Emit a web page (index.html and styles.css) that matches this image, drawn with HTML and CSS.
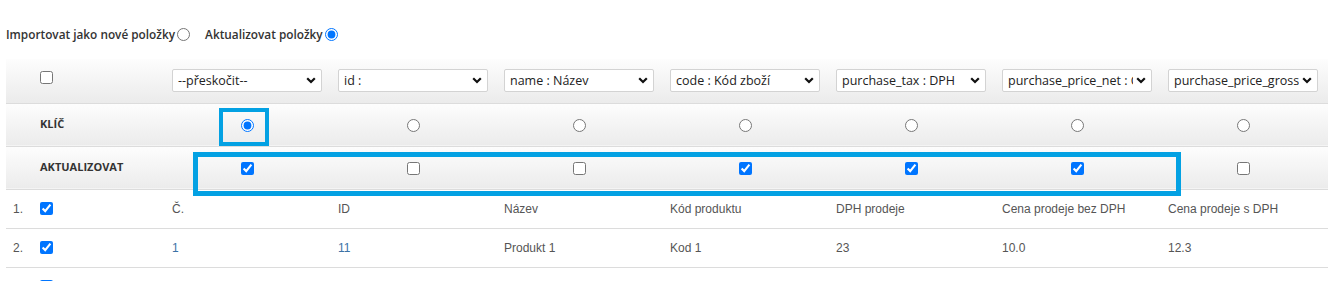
FILE: index.html
```html
<!DOCTYPE html>
<html lang="cs">
<head>
    <meta charset="UTF-8">
    <title>Import položek</title>
    <link rel="stylesheet" href="styles.css">
</head>
<body>
<div id="import">
    <div class="mode">
        <label>Importovat jako nové položky<input type="radio" name="mode" /></label>
        <label>Aktualizovat položky<input type="radio" name="mode" checked /></label>
    </div>
    <div class="gridWrap">
        <table class="grid">
            <colgroup>
                <col class="first" />
                <col /><col /><col /><col /><col /><col /><col />
            </colgroup>
            <tr class="headRow">
                <td class="lead"><input type="checkbox" /></td>
                <td><select><option>--přeskočit--</option></select></td>
                <td><select><option>id :</option></select></td>
                <td><select><option>name : Název</option></select></td>
                <td><select><option>code : Kód zboží</option></select></td>
                <td><select><option>purchase_tax : DPH</option></select></td>
                <td><select><option>purchase_price_net : Cena bez DPH</option></select></td>
                <td><select><option>purchase_price_gross : Cena s DPH</option></select></td>
            </tr>
            <tr class="headRow">
                <td class="lead"><span class="tag">KLÍČ</span></td>
                <td class="mid"><input type="radio" name="key" checked /></td>
                <td class="mid"><input type="radio" name="key" /></td>
                <td class="mid"><input type="radio" name="key" /></td>
                <td class="mid"><input type="radio" name="key" /></td>
                <td class="mid"><input type="radio" name="key" /></td>
                <td class="mid"><input type="radio" name="key" /></td>
                <td class="mid"><input type="radio" name="key" /></td>
            </tr>
            <tr class="headRow">
                <td class="lead"><span class="tag">AKTUALIZOVAT</span></td>
                <td class="mid"><input type="checkbox" checked /></td>
                <td class="mid"><input type="checkbox" /></td>
                <td class="mid"><input type="checkbox" /></td>
                <td class="mid"><input type="checkbox" checked /></td>
                <td class="mid"><input type="checkbox" checked /></td>
                <td class="mid"><input type="checkbox" checked /></td>
                <td class="mid"><input type="checkbox" /></td>
            </tr>
            <tr class="dataRow">
                <td class="lead"><span class="num">1.</span><input type="checkbox" checked /></td>
                <td>Č.</td>
                <td>ID</td>
                <td>Název</td>
                <td>Kód produktu</td>
                <td>DPH prodeje</td>
                <td>Cena prodeje bez DPH</td>
                <td>Cena prodeje s DPH</td>
            </tr>
            <tr class="dataRow">
                <td class="lead"><span class="num">2.</span><input type="checkbox" checked /></td>
                <td class="link">1</td>
                <td class="link">11</td>
                <td>Produkt 1</td>
                <td>Kod 1</td>
                <td>23</td>
                <td>10.0</td>
                <td>12.3</td>
            </tr>
            <!-- další řádek začíná pod okrajem, vidět je jen zaškrtávátko -->
            <tr class="dataRow">
                <td class="lead"><span class="num"></span><input type="checkbox" checked /></td>
                <td></td><td></td><td></td><td></td><td></td><td></td><td></td>
            </tr>
        </table>
        <!-- zvýraznění pro návod -->
        <div class="mark markKey"></div>
        <div class="mark markUpdate"></div>
    </div>
</div>
</body>
</html>
```

FILE: styles.css
```css
*{ margin: 0; padding: 0; box-sizing: border-box; }
html, body{ overflow: hidden; }
body{ background: #fff; color: #333; font: 12px/1.5 "Open Sans", "Noto Sans", sans-serif; }

#import{ padding: 26px 0 0 6px; }
#import .mode{ height: 16px; line-height: 16px; font-weight: 600; font-size: 11.8px; color: #333; }
#import .mode label{ margin-right: 12px; }
#import .mode input{ width: 13px; height: 13px; margin: 0 0 0 2px; vertical-align: -2px; }

.gridWrap{ position: relative; margin-top: 17px; width: 1323px; }
.grid{ width: 1323px; table-layout: fixed; border-collapse: collapse; }
.grid col{ width: 166px; }
.grid col.first{ width: 161px; }
.grid td{ padding: 0 11px 0 5px; text-align: left; }
.grid td.lead{ padding-left: 34px; }

.headRow td{ background: linear-gradient(#fdfdfd, #ebebeb); border-bottom: 1px solid #dcdcdc; }
.headRow:first-child td{ height: 44px; }
.headRow:first-child td.lead input{ vertical-align: 1px; }
.headRow + .headRow td{ height: 43px; vertical-align: top; padding-top: 11px; }
.headRow:last-child td{ border-bottom: 0; height: 42px; }
.headRow td.mid{ text-align: center; padding-top: 0; vertical-align: middle; }
.headRow td.mid input{ margin: 0; vertical-align: middle; }
.headRow .tag{ font: bold 11px/14px "Open Sans", "Noto Sans", sans-serif; color: #333; }
.headRow td.lead input{ margin: 0; vertical-align: middle; }

.grid select{
    -webkit-appearance: none; appearance: none;
    width: 150px; height: 23px; padding: 0 18px 0 5px;
    border: 1px solid #d3d3d3; border-radius: 2px; color: #222;
    font: 12.5px "Open Sans", "Noto Sans", sans-serif;
    background: #fff url("data:image/svg+xml,%3Csvg xmlns='http://www.w3.org/2000/svg' width='10' height='7' viewBox='0 0 10 7'%3E%3Cpath d='M1.2 1.2 5 5 8.8 1.2' fill='none' stroke='%23111' stroke-width='2.2'/%3E%3C/svg%3E") no-repeat right 5px center;
}

.dataRow td{ height: 39px; border-bottom: 1px solid #dcdcdc; font: 12px "Liberation Sans", Arial, sans-serif; color: #555; white-space: nowrap; }
.dataRow td.lead{ padding-left: 7px; }
.dataRow .num{ display: inline-block; width: 27px; color: #555; }
.dataRow td.lead input{ margin: 0; vertical-align: -2px; }
.dataRow td.link{ color: #3b72a6; }

.mark{ position: absolute; border: 4px solid #03a1e3; }
.markKey{ left: 213px; top: 49px; width: 50px; height: 38px; }
.markUpdate{ left: 187px; top: 93px; width: 988px; height: 44px; border-width: 5px; }
```
